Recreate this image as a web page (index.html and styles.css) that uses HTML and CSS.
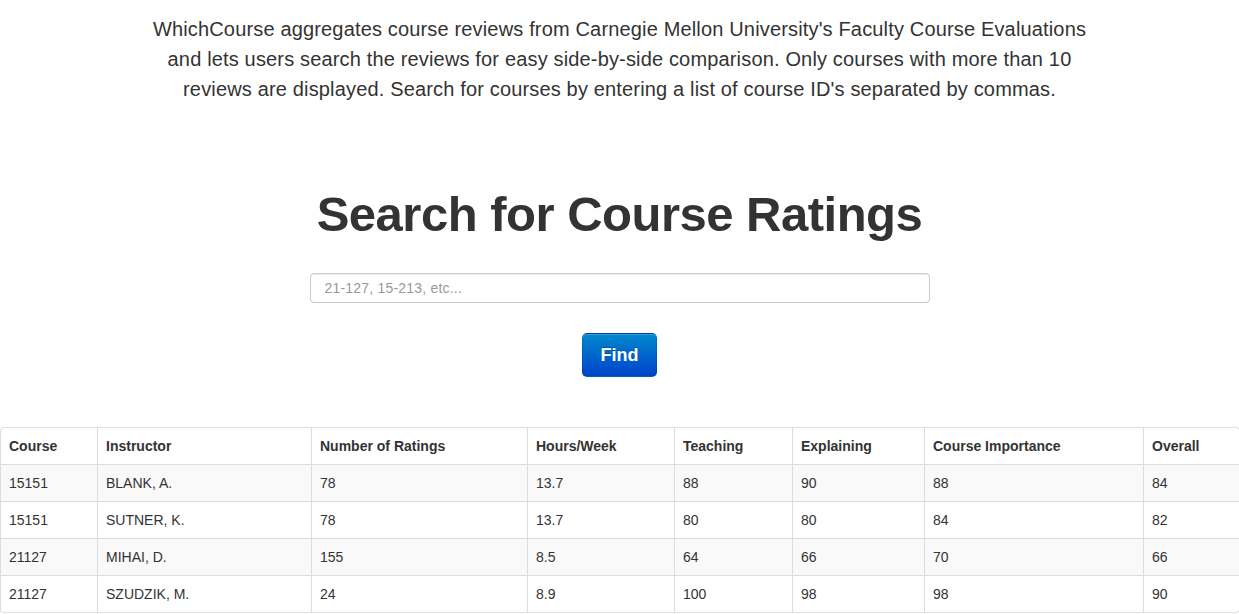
FILE: index.html
```html
<!DOCTYPE html>
<html>
<head>
<meta charset="utf-8">
<title>WhichCourse</title>
<link rel="stylesheet" href="styles.css">
</head>
<body>
<div class="container">
  <p class="lead">WhichCourse aggregates course reviews from Carnegie Mellon University's Faculty Course Evaluations and lets users search the reviews for easy side-by-side comparison. Only courses with more than 10 reviews are displayed. Search for courses by entering a list of course ID's separated by commas.</p>
  <h1 class="title">Search for Course Ratings</h1>
  <form class="search">
    <input class="search-input" type="text" placeholder="21-127, 15-213, etc...">
    <button class="btn-find" type="button">Find</button>
  </form>
</div>
<table class="results">
  <colgroup>
    <col class="c1"><col class="c2"><col class="c3"><col class="c4"><col class="c5"><col class="c6"><col class="c7"><col class="c8">
  </colgroup>
  <thead>
    <tr><th>Course</th><th>Instructor</th><th>Number of Ratings</th><th>Hours/Week</th><th>Teaching</th><th>Explaining</th><th>Course Importance</th><th>Overall</th></tr>
  </thead>
  <tbody>
    <tr><td>15151</td><td>BLANK, A.</td><td>78</td><td>13.7</td><td>88</td><td>90</td><td>88</td><td>84</td></tr>
    <tr><td>15151</td><td>SUTNER, K.</td><td>78</td><td>13.7</td><td>80</td><td>80</td><td>84</td><td>82</td></tr>
    <tr><td>21127</td><td>MIHAI, D.</td><td>155</td><td>8.5</td><td>64</td><td>66</td><td>70</td><td>66</td></tr>
    <tr><td>21127</td><td>SZUDZIK, M.</td><td>24</td><td>8.9</td><td>100</td><td>98</td><td>98</td><td>90</td></tr>
  </tbody>
</table>
</body>
</html>
```

FILE: styles.css
```css
* { box-sizing: border-box; }
html, body { margin: 0; padding: 0; }
body {
  font-family: "Liberation Sans", Arial, sans-serif;
  font-size: 14px;
  line-height: 20px;
  color: #333;
  background: #fff;
  overflow: hidden;
}
.container {
  width: 940px;
  margin: 0 auto;
  text-align: center;
  padding-top: 14px;
}
.lead {
  margin: 0;
  font-size: 20px;
  font-weight: normal;
  line-height: 30px;
  letter-spacing: 0.16px;
  color: #333;
}
.title {
  margin: 82px 0 0;
  font-size: 49px;
  line-height: 56px;
  font-weight: bold;
  color: #333;
  letter-spacing: -0.5px;
}
.search {
  margin: 0;
  padding-top: 31px;
  display: flex;
  flex-direction: column;
  align-items: center;
}
.search-input {
  width: 620px;
  height: 30px;
  padding: 4px 14px;
  font-family: "Liberation Sans", Arial, sans-serif;
  font-size: 14px;
  letter-spacing: 0.2px;
  color: #555;
  border: 1px solid #ccc;
  border-radius: 4px;
  box-shadow: inset 0 1px 1px rgba(0,0,0,0.075);
  outline: none;
}
.search-input::placeholder { color: #999; }
.btn-find {
  margin-top: 30px;
  width: 75px;
  height: 44px;
  font-family: "Liberation Sans", Arial, sans-serif;
  font-size: 18px;
  font-weight: bold;
  color: #fff;
  text-shadow: 0 -1px 0 rgba(0,0,0,0.25);
  background: linear-gradient(to bottom, #0088cc, #0044cc);
  border: 1px solid #0044cc;
  border-color: rgba(0,0,0,0.1) rgba(0,0,0,0.1) rgba(0,0,0,0.25);
  border-radius: 5px;
  box-shadow: inset 0 1px 0 rgba(255,255,255,0.2), 0 1px 2px rgba(0,0,0,0.05);
  cursor: pointer;
}
.results {
  margin-top: 50px;
  width: 1239px;
  table-layout: fixed;
  border-collapse: separate;
  border-spacing: 0;
  border: 1px solid #ddd;
  border-left: 0;
  border-radius: 4px;
  text-align: left;
}
.c1 { width: 97px; }
.c2 { width: 214px; }
.c3 { width: 216px; }
.c4 { width: 147px; }
.c5 { width: 118px; }
.c6 { width: 132px; }
.c7 { width: 219px; }
.c8 { width: 96px; }
.results th, .results td {
  padding: 8px;
  line-height: 20px;
  font-size: 14px;
  border-left: 1px solid #ddd;
  border-top: 1px solid #ddd;
  vertical-align: top;
  white-space: nowrap;
}
.results th { font-weight: bold; border-top: 0; }
.results tbody tr:nth-child(odd) td { background: #f9f9f9; }
.results thead th:first-child { border-top-left-radius: 4px; }
```
